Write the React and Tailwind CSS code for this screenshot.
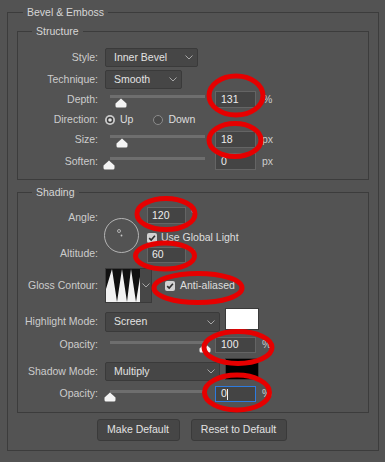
import React from 'react';

/* ── small Photoshop-style controls ── */
const Chevron = () => (
  <svg width="8" height="5" viewBox="0 0 8 5" className="shrink-0">
    <path d="M0.5 0.5 L4 4 L7.5 0.5" fill="none" stroke="#a6a6a6" strokeWidth="1" />
  </svg>
);

const Thumb = () => (
  <svg width="12" height="10" viewBox="0 0 12 10">
    <path d="M6 0.5 L11.5 5.5 V8 Q11.5 9.5 10 9.5 H2 Q0.5 9.5 0.5 8 V5.5 Z" fill="#f4f4f4" />
  </svg>
);

const Check = () => (
  <span className="w-[10px] h-[10px] rounded-[2px] bg-[#d2d2d2] flex items-center justify-center shrink-0">
    <svg width="8" height="8" viewBox="0 0 8 8">
      <path d="M1.2 4.2 L3.2 6.1 L6.9 1.8" fill="none" stroke="#2e2e2e" strokeWidth="1.6" />
    </svg>
  </span>
);

function Row({ label, className = '', children }) {
  return (
    <div className={`flex items-center ${className}`}>
      <span className="w-[80px] shrink-0 text-right text-[#cccccc]">{label}</span>
      <div className="ml-[7px] flex items-center h-full">{children}</div>
    </div>
  );
}

function Select({ value, className }) {
  return (
    <div className={`h-full flex items-center justify-between pl-[8px] pr-[4px] bg-[#464646] border border-[#3a3a3a] rounded-[2px] text-[#e2e2e2] ${className}`}>
      <span>{value}</span>
      <Chevron />
    </div>
  );
}

function Field({ value, active = false }) {
  return (
    <div className={`w-[41px] h-full flex items-center pl-[5px] bg-[#444444] border text-[#ededed] ${active ? 'border-[#2d7be0]' : 'border-[#646464]'}`}>
      {value}
      {active && <span className="w-px h-[11px] bg-[#f0f0f0]" />}
    </div>
  );
}

function Slider({ thumb, track = 'top-[4px]', knob = 'top-[7px]' }) {
  return (
    <div className="relative w-[110px] h-full shrink-0">
      <div className={`absolute left-[5px] w-[95px] h-[3px] bg-[#6e6e6e] ${track}`} />
      <div className={`absolute ${knob} ${thumb}`}>
        <Thumb />
      </div>
    </div>
  );
}

function SliderRow({ label, value, unit, thumb, className, h = 'h-[17px]', knob, active, unitGap = 'ml-[6px]' }) {
  return (
    <Row label={label} className={`${h} ${className}`}>
      <Slider thumb={thumb} knob={knob} />
      <Field value={value} active={active} />
      <span className={`${unitGap} text-[#cccccc]`}>{unit}</span>
    </Row>
  );
}

function Group({ title, className, children }) {
  return (
    <fieldset className={`border border-[#3c3c3c] ${className}`}>
      <legend className="ml-[14px] px-[4px] leading-[14px] text-[#d6d6d6]">{title}</legend>
      {children}
    </fieldset>
  );
}

// hand-drawn red circles from the annotated screenshot
const MARKS = [
  { cx: 236, cy: 95.5, rx: 27, ry: 19.5 },
  { cx: 235, cy: 140, rx: 26, ry: 16.5 },
  { cx: 166, cy: 214, rx: 29, ry: 15.5 },
  { cx: 165, cy: 256, rx: 29.5, ry: 13 },
  { cx: 198, cy: 288, rx: 44, ry: 14.5 },
  { cx: 238, cy: 347.5, rx: 34, ry: 16 },
  { cx: 237, cy: 392.5, rx: 32.5, ry: 17.5 },
];

export default function App() {
  return (
    <div className="relative w-[385px] h-[462px] overflow-hidden bg-[#535353] pt-[5px] text-[10.5px] font-['Liberation_Sans',Arial,sans-serif] select-none">
      <fieldset className="ml-[7px] w-[372px] border border-[#3c3c3c]">
        <legend className="ml-[15px] px-[4px] leading-[14px] text-[#d6d6d6]">Bevel &amp; Emboss</legend>
        <div className="pb-[9px]">
          {/* Structure */}
          <Group title="Structure" className="mt-[5px] ml-[9px] w-[352px]">
            <div className="pb-[9px]">
              <Row label="Style:" className="h-[19px] mt-[10px]">
                <Select value="Inner Bevel" className="w-[93px]" />
              </Row>
              <Row label="Technique:" className="h-[19px] mt-[3px]">
                <Select value="Smooth" className="w-[77px]" />
              </Row>
              <SliderRow label="Depth:" value="131" unit="%" thumb="left-[10px]" className="mt-[2px]" unitGap="ml-[7px]" />
              <Row label="Direction:" className="h-[16px] mt-[4px]">
                <svg width="10" height="10" viewBox="0 0 10 10">
                  <circle cx="5" cy="5" r="5" fill="#c9c9c9" />
                  <circle cx="5" cy="5" r="3.2" fill="#3d3d3d" />
                  <circle cx="5" cy="5" r="1.8" fill="#e2e2e2" />
                </svg>
                <span className="ml-[5px] text-[#dedede]">Up</span>
                <svg width="10" height="10" viewBox="0 0 10 10" className="ml-[20px]">
                  <circle cx="5" cy="5" r="4.5" fill="#4a4a4a" stroke="#8c8c8c" strokeWidth="1" />
                </svg>
                <span className="ml-[5px] text-[#dedede]">Down</span>
              </Row>
              <SliderRow label="Size:" value="18" unit="px" thumb="left-[11px]" className="mt-[3px]" />
              <SliderRow label="Soften:" value="0" unit="px" thumb="-left-[2px]" className="mt-[5px]" />
            </div>
          </Group>

          {/* Shading */}
          <Group title="Shading" className="mt-[5px] ml-[9px] w-[352px]">
            <div className="pb-[10px]">
              <div className="flex items-start mt-[8px]">
                <div className="w-[80px] shrink-0 flex flex-col items-end text-[#cccccc]">
                  <span className="h-[17px] mt-[2px] flex items-center">Angle:</span>
                  <span className="h-[16px] mt-[20px] flex items-center">Altitude:</span>
                </div>
                <svg width="35" height="35" viewBox="0 0 35 35" className="ml-[6px] mt-[11px] shrink-0">
                  <circle cx="17.5" cy="17.5" r="17" fill="none" stroke="#b4b4b4" strokeWidth="1" />
                  <circle cx="15" cy="13" r="1.5" fill="none" stroke="#c8c8c8" strokeWidth="0.8" />
                  <circle cx="17.5" cy="17.5" r="0.9" fill="#c8c8c8" />
                </svg>
                <div className="ml-[8px] flex flex-col">
                  <div className="h-[17px] flex">
                    <div className="w-[39px] h-full flex items-center pl-[4px] bg-[#444444] border border-[#646464] text-[#ededed]">120</div>
                    <span className="ml-[5px] leading-[12px] text-[#cccccc]">°</span>
                  </div>
                  <div className="h-[12px] mt-[8px] flex items-center">
                    <Check />
                    <span className="ml-[4px] text-[#dedede]">Use Global Light</span>
                  </div>
                  <div className="h-[16px] mt-[3px] flex">
                    <div className="w-[39px] h-full flex items-center pl-[4px] bg-[#444444] border border-[#646464] text-[#ededed]">60</div>
                    <span className="ml-[5px] leading-[12px] text-[#cccccc]">°</span>
                  </div>
                </div>
              </div>

              <Row label="Gloss Contour:" className="h-[35px] mt-[5px]">
                <div className="w-[47px] h-full flex items-center bg-[#474747] border border-[#3a3a3a]">
                  <svg width="34" height="33" viewBox="0 0 34 33" className="shrink-0">
                    <rect width="34" height="33" fill="#111" />
                    <path d="M0 33 L0 20 L6 0 L11 33 L16 0 L21 33 L25 0 L30 33 Z" fill="#f2f2f2" />
                    <path d="M30 33 L34 8 L34 33 Z" fill="#f2f2f2" />
                  </svg>
                  <div className="flex-1 flex justify-center">
                    <Chevron />
                  </div>
                </div>
                <span className="ml-[13px]"><Check /></span>
                <span className="ml-[5px] text-[#dedede]">Anti-aliased</span>
              </Row>

              <div className="flex h-[20px] mt-[9px]">
                <span className="w-[80px] shrink-0 text-right text-[#cccccc] self-center">Highlight Mode:</span>
                <Select value="Screen" className="ml-[7px] w-[115px]" />
                <div className="ml-[5px] -mt-[4px] w-[34px] h-[22px] bg-white border border-[#3a3a3a]" />
              </div>
              <SliderRow label="Opacity:" value="100" unit="%" thumb="left-[94px]" h="h-[16px]" knob="top-[6px]" className="mt-[5px]" />

              <div className="flex h-[19px] mt-[9px]">
                <span className="w-[80px] shrink-0 text-right text-[#cccccc] self-center">Shadow Mode:</span>
                <Select value="Multiply" className="ml-[7px] w-[115px]" />
                <div className="ml-[5px] -mt-[4px] w-[34px] h-[22px] bg-black border border-[#3a3a3a]" />
              </div>
              <SliderRow label="Opacity:" value="0" unit="%" thumb="-left-[1px]" h="h-[16px]" knob="top-[6px]" className="mt-[5px]" active />
            </div>
          </Group>

          <div className="flex justify-center gap-[11px] mt-[6px] pr-[3px]">
            <button className="w-[83px] h-[22px] bg-[#464646] border border-[#3a3a3a] rounded-[3px] text-[#e2e2e2]">Make Default</button>
            <button className="w-[96px] h-[22px] bg-[#464646] border border-[#3a3a3a] rounded-[3px] text-[#e2e2e2]">Reset to Default</button>
          </div>
        </div>
      </fieldset>

      {/* annotation overlay */}
      <svg width="385" height="462" className="absolute inset-0 pointer-events-none">
        {MARKS.map((m, i) => (
          <ellipse key={i} {...m} fill="none" stroke="#e60000" strokeWidth="5" />
        ))}
      </svg>
    </div>
  );
}
